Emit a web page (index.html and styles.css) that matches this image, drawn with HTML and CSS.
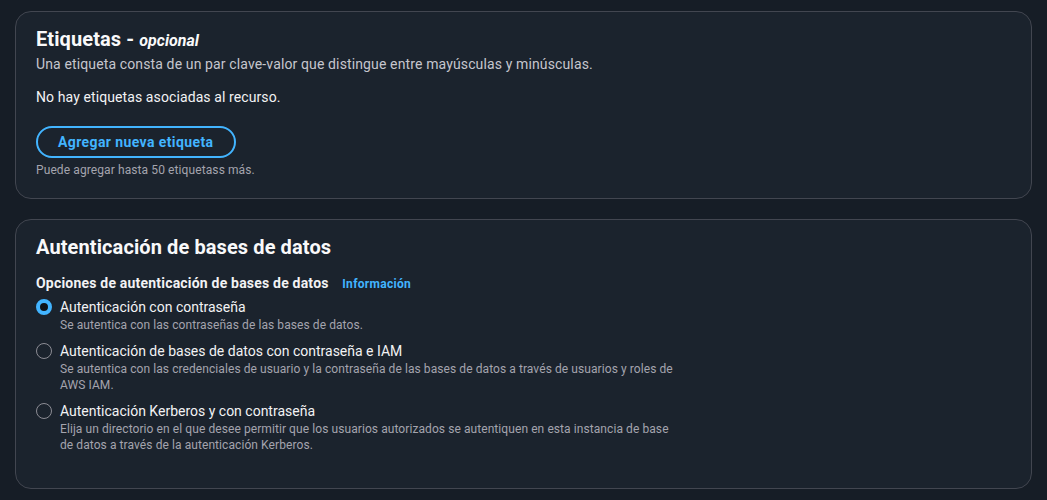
FILE: index.html
```html
<!DOCTYPE html>
<html lang="es">
<head>
<meta charset="utf-8">
<title>Configuración</title>
<link rel="stylesheet" href="styles.css">
</head>
<body>
<main class="page">
  <section class="card card-tags">
    <h2 class="card-title">Etiquetas - <i class="optional">opcional</i></h2>
    <p class="card-desc">Una etiqueta consta de un par clave-valor que distingue entre mayúsculas y minúsculas.</p>
    <p class="empty">No hay etiquetas asociadas al recurso.</p>
    <button class="btn" type="button">Agregar nueva etiqueta</button>
    <p class="hint">Puede agregar hasta 50 etiquetass más.</p>
  </section>

  <section class="card card-auth">
    <h2 class="card-title big">Autenticación de bases de datos</h2>
    <div class="field-label">Opciones de autenticación de bases de datos <a class="info" href="#">Información</a></div>
    <div class="options">
      <label class="option">
        <span class="radio checked"></span>
        <span class="option-body">
          <span class="option-title">Autenticación con contraseña</span>
          <span class="option-desc">Se autentica con las contraseñas de las bases de datos.</span>
        </span>
      </label>
      <label class="option">
        <span class="radio"></span>
        <span class="option-body">
          <span class="option-title">Autenticación de bases de datos con contraseña e IAM</span>
          <span class="option-desc">Se autentica con las credenciales de usuario y la contraseña de las bases de datos a través de usuarios y roles de AWS IAM.</span>
        </span>
      </label>
      <label class="option">
        <span class="radio"></span>
        <span class="option-body">
          <span class="option-title">Autenticación Kerberos y con contraseña</span>
          <span class="option-desc">Elija un directorio en el que desee permitir que los usuarios autorizados se autentiquen en esta instancia de base de datos a través de la autenticación Kerberos.</span>
        </span>
      </label>
    </div>
  </section>
</main>
</body>
</html>
```

FILE: styles.css
```css
* { box-sizing: border-box; }
html, body { margin: 0; padding: 0; }
body {
  background: #161d26;
  font-family: Roboto, "Noto Sans", sans-serif;
  color: #c6c6cd;
  height: 500px;
  overflow: hidden;
}
.page {
  padding: 11px 15px 0 15px;
  display: flex;
  flex-direction: column;
  gap: 20px;
}
.card {
  background: #1b232d;
  border: 1px solid #424650;
  border-radius: 16px;
  padding: 14px 20px 20px 20px;
  display: flex;
  flex-direction: column;
  align-items: flex-start;
}
.card-tags { height: 188px; }
.card-auth {
  height: 270px;
  padding-top: 13px;
}
.card-title {
  margin: 0;
  font-size: 20px;
  line-height: 26px;
  font-weight: 700;
  color: #f9f9fa;
  letter-spacing: 0.1px;
}
.card-title.big { font-size: 20px; line-height: 28px; }
.optional {
  font-size: 16px;
  font-weight: 700;
  letter-spacing: 0;
}
.card-desc {
  margin: 0;
  font-size: 14px;
  line-height: 20px;
  color: #c6c6cd;
  letter-spacing: 0.13px;
}
.empty {
  margin: 13px 0 0 0;
  font-size: 14px;
  line-height: 20px;
  color: #f2f2f4;
  letter-spacing: 0.1px;
}
.btn {
  margin-top: 19px;
  height: 32px;
  padding: 0 20px;
  border: 2px solid #42b4ff;
  border-radius: 16px;
  background: transparent;
  color: #42b4ff;
  font-family: inherit;
  font-size: 14px;
  font-weight: 700;
  letter-spacing: 0.4px;
}
.hint {
  margin: 4px 0 0 0;
  font-size: 12px;
  line-height: 16px;
  color: #a4a4ad;
  letter-spacing: 0.1px;
}
.field-label {
  margin-top: 12px;
  font-size: 14px;
  line-height: 20px;
  font-weight: 700;
  color: #f2f2f4;
  letter-spacing: 0.2px;
}
.info {
  margin-left: 10px;
  font-size: 12px;
  font-weight: 700;
  color: #42b4ff;
  text-decoration: none;
  letter-spacing: 0.3px;
}
.options {
  margin-top: 3px;
  display: flex;
  flex-direction: column;
  gap: 8px;
}
.option {
  display: flex;
  gap: 8px;
  align-items: flex-start;
}
.radio {
  flex: none;
  width: 16px;
  height: 16px;
  margin-top: 2px;
  border-radius: 50%;
  border: 1.5px solid #8c8c94;
}
.radio.checked {
  border: 4.5px solid #42b4ff;
  background: #0f141a;
}
.option-body {
  display: flex;
  flex-direction: column;
  max-width: 620px;
}
.option-title {
  font-size: 14px;
  line-height: 20px;
  color: #f2f2f4;
}
.option-desc {
  font-size: 12px;
  line-height: 16px;
  color: #a4a4ad;
  letter-spacing: 0.08px;
}
```
